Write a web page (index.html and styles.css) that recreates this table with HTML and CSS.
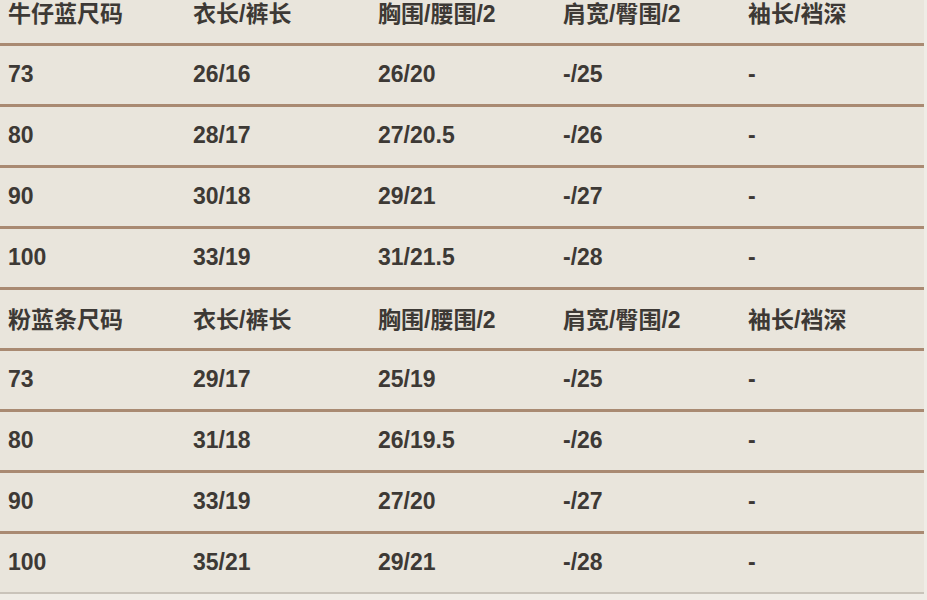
FILE: index.html
```html
<!DOCTYPE html>
<html lang="zh">
<head>
<meta charset="utf-8">
<link rel="stylesheet" href="styles.css">
</head>
<body>
<table class="size-table">
  <colgroup><col class="c"><col class="c"><col class="c"><col class="c"><col class="c-last"></colgroup>
  <tbody>
    <tr class="head"><td>牛仔蓝尺码</td><td>衣长/裤长</td><td>胸围/腰围/2</td><td>肩宽/臀围/2</td><td>袖长/裆深</td></tr>
    <tr><td>73</td><td>26/16</td><td>26/20</td><td>-/25</td><td>-</td></tr>
    <tr><td>80</td><td>28/17</td><td>27/20.5</td><td>-/26</td><td>-</td></tr>
    <tr><td>90</td><td>30/18</td><td>29/21</td><td>-/27</td><td>-</td></tr>
    <tr><td>100</td><td>33/19</td><td>31/21.5</td><td>-/28</td><td>-</td></tr>
    <tr class="head"><td>粉蓝条尺码</td><td>衣长/裤长</td><td>胸围/腰围/2</td><td>肩宽/臀围/2</td><td>袖长/裆深</td></tr>
    <tr><td>73</td><td>29/17</td><td>25/19</td><td>-/25</td><td>-</td></tr>
    <tr><td>80</td><td>31/18</td><td>26/19.5</td><td>-/26</td><td>-</td></tr>
    <tr><td>90</td><td>33/19</td><td>27/20</td><td>-/27</td><td>-</td></tr>
    <tr class="last"><td>100</td><td>35/21</td><td>29/21</td><td>-/28</td><td>-</td></tr>
  </tbody>
</table>
</body>
</html>
```
FILE: styles.css
```css
html, body {
  margin: 0;
  padding: 0;
  background: #efece6;
}
body {
  overflow: hidden;
  height: 600px;
}
.size-table {
  width: 924px;
  margin-top: -17px;
  border-collapse: collapse;
  table-layout: fixed;
  background: #e9e5dc;
  font-family: "Liberation Sans", "Noto Sans CJK SC", sans-serif;
  font-size: 23px;
  font-weight: bold;
  color: #3d3935;
}
.c { width: 185px; }
.c-last { width: 184px; }
.size-table td {
  height: 61px;
  padding: 0 0 1px 8px;
  vertical-align: middle;
  white-space: nowrap;
  border-bottom: 3px solid #a98a72;
  box-sizing: border-box;
}
.size-table tr.last td {
  border-bottom: 2px solid #c9c3ba;
}
```
